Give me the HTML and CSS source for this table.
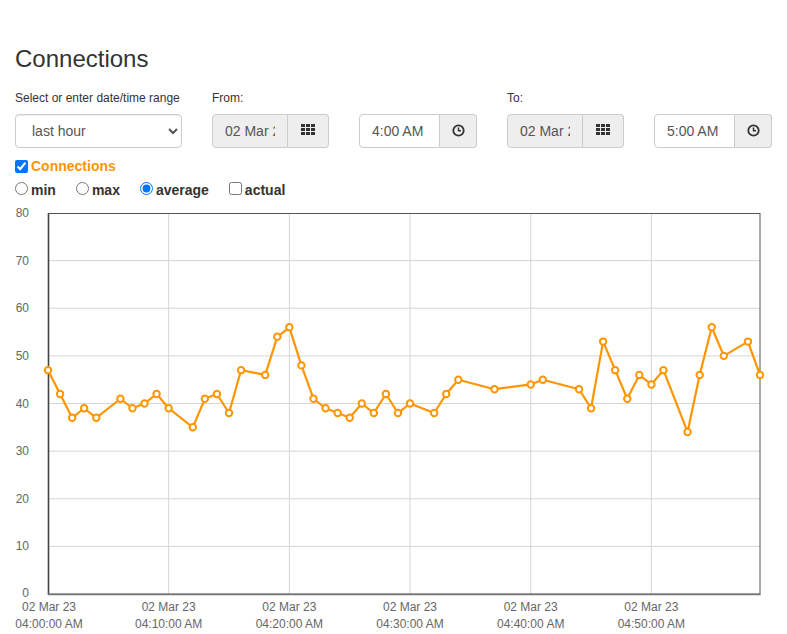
FILE: index.html
```html
<!DOCTYPE html>
<html>
<head>
<meta charset="utf-8">
<link rel="stylesheet" href="styles.css">
</head>
<body>
<div class="page">
  <h1 class="title">Connections</h1>
  <div class="range-row">
    <div class="field field-select">
      <label class="field-label">Select or enter date/time range</label>
      <select class="control select">
        <option>last hour</option>
      </select>
    </div>
    <div class="field field-date">
      <label class="field-label">From:</label>
      <div class="group">
        <input class="control date-input" type="text" value="02 Mar 2023" readonly>
        <span class="addon addon-btn">
          <svg width="14" height="11" viewBox="0 0 14 11"><g fill="#333"><rect x="0" y="0" width="4" height="3"/><rect x="5" y="0" width="4" height="3"/><rect x="10" y="0" width="4" height="3"/><rect x="0" y="4" width="4" height="3"/><rect x="5" y="4" width="4" height="3"/><rect x="10" y="4" width="4" height="3"/><rect x="0" y="8" width="4" height="3"/><rect x="5" y="8" width="4" height="3"/><rect x="10" y="8" width="4" height="3"/></g></svg>
        </span>
      </div>
    </div>
    <div class="field field-time">
      <span class="field-label">&nbsp;</span>
      <div class="group">
        <input class="control time-input" type="text" value="4:00 AM">
        <span class="addon addon-time">
          <svg width="13" height="13" viewBox="0 0 13 13"><circle cx="6.5" cy="6.5" r="5.2" fill="none" stroke="#333" stroke-width="1.8"/><path d="M6.5 3.4V6.8H9" fill="none" stroke="#333" stroke-width="1.5"/></svg>
        </span>
      </div>
    </div>
    <div class="field field-date">
      <label class="field-label">To:</label>
      <div class="group">
        <input class="control date-input" type="text" value="02 Mar 2023" readonly>
        <span class="addon addon-btn">
          <svg width="14" height="11" viewBox="0 0 14 11"><g fill="#333"><rect x="0" y="0" width="4" height="3"/><rect x="5" y="0" width="4" height="3"/><rect x="10" y="0" width="4" height="3"/><rect x="0" y="4" width="4" height="3"/><rect x="5" y="4" width="4" height="3"/><rect x="10" y="4" width="4" height="3"/><rect x="0" y="8" width="4" height="3"/><rect x="5" y="8" width="4" height="3"/><rect x="10" y="8" width="4" height="3"/></g></svg>
        </span>
      </div>
    </div>
    <div class="field field-time">
      <span class="field-label">&nbsp;</span>
      <div class="group">
        <input class="control time-input" type="text" value="5:00 AM">
        <span class="addon addon-time">
          <svg width="13" height="13" viewBox="0 0 13 13"><circle cx="6.5" cy="6.5" r="5.2" fill="none" stroke="#333" stroke-width="1.8"/><path d="M6.5 3.4V6.8H9" fill="none" stroke="#333" stroke-width="1.5"/></svg>
        </span>
      </div>
    </div>
  </div>

  <div class="series-row">
    <label class="series"><input type="checkbox" checked class="box"><span class="series-name">Connections</span></label>
  </div>
  <div class="mode-row">
    <label class="mode"><input type="radio" name="mode" class="box">min</label>
    <label class="mode"><input type="radio" name="mode" class="box">max</label>
    <label class="mode"><input type="radio" name="mode" class="box" checked>average</label>
    <label class="mode"><input type="checkbox" class="box">actual</label>
  </div>

  <svg class="chart" width="772" height="434" viewBox="0 0 772 434">
    <g stroke="#d6d6d6" stroke-width="1" fill="none">
      <line x1="33" y1="346.4" x2="745" y2="346.4"/>
      <line x1="33" y1="298.75" x2="745" y2="298.75"/>
      <line x1="33" y1="251.1" x2="745" y2="251.1"/>
      <line x1="33" y1="203.5" x2="745" y2="203.5"/>
      <line x1="33" y1="155.9" x2="745" y2="155.9"/>
      <line x1="33" y1="108.25" x2="745" y2="108.25"/>
      <line x1="33" y1="60.6" x2="745" y2="60.6"/>
      <line x1="153.68" y1="13" x2="153.68" y2="394"/>
      <line x1="274.36" y1="13" x2="274.36" y2="394"/>
      <line x1="395.03" y1="13" x2="395.03" y2="394"/>
      <line x1="515.71" y1="13" x2="515.71" y2="394"/>
      <line x1="636.39" y1="13" x2="636.39" y2="394"/>
    </g>
    <rect x="33.5" y="13.5" width="711.5" height="380.5" fill="none" stroke="#555" stroke-width="1"/>
    <line x1="33.5" y1="13" x2="33.5" y2="395" stroke="#444" stroke-width="1.6"/>
    <line x1="33" y1="394.5" x2="745.5" y2="394.5" stroke="#777" stroke-width="1.6"/>
    <g class="axis-text" text-anchor="end">
      <text x="14" y="17">80</text>
      <text x="14" y="64.6">70</text>
      <text x="14" y="112.3">60</text>
      <text x="14" y="159.9">50</text>
      <text x="14" y="207.5">40</text>
      <text x="14" y="255.1">30</text>
      <text x="14" y="302.8">20</text>
      <text x="14" y="350.4">10</text>
      <text x="14" y="397">0</text>
    </g>
    <g class="axis-text" text-anchor="middle">
      <text x="34" y="411">02 Mar 23</text><text x="34" y="428">04:00:00 AM</text>
      <text x="153.68" y="411">02 Mar 23</text><text x="153.68" y="428">04:10:00 AM</text>
      <text x="274.36" y="411">02 Mar 23</text><text x="274.36" y="428">04:20:00 AM</text>
      <text x="395.03" y="411">02 Mar 23</text><text x="395.03" y="428">04:30:00 AM</text>
      <text x="515.71" y="411">02 Mar 23</text><text x="515.71" y="428">04:40:00 AM</text>
      <text x="636.39" y="411">02 Mar 23</text><text x="636.39" y="428">04:50:00 AM</text>
    </g>
    <polyline class="series-line" points="33,170.16 45.07,193.97 57.14,217.79 69.2,208.26 81.27,217.79 105.41,198.74 117.47,208.26 129.54,203.5 141.61,193.97 153.68,208.26 177.81,227.31 189.88,198.74 201.95,193.97 214.02,213.02 226.08,170.16 250.22,174.92 262.29,136.82 274.36,127.3 286.42,165.4 298.49,198.74 310.56,208.26 322.63,213.02 334.69,217.79 346.76,203.5 358.83,213.02 370.9,193.97 382.97,213.02 395.03,203.5 419.17,213.02 431.24,193.97 443.31,179.69 479.51,189.21 515.71,184.45 527.78,179.69 563.98,189.21 576.05,208.26 588.12,141.59 600.19,170.16 612.25,198.74 624.32,174.92 636.39,184.45 648.46,170.16 672.59,232.07 684.66,174.92 696.73,127.3 708.8,155.87 732.93,141.59 745,174.92"/>
    <g class="markers">
      <circle cx="33" cy="170.16" r="3.2"/><circle cx="45.07" cy="193.97" r="3.2"/><circle cx="57.14" cy="217.79" r="3.2"/><circle cx="69.2" cy="208.26" r="3.2"/><circle cx="81.27" cy="217.79" r="3.2"/><circle cx="105.41" cy="198.74" r="3.2"/><circle cx="117.47" cy="208.26" r="3.2"/><circle cx="129.54" cy="203.5" r="3.2"/><circle cx="141.61" cy="193.97" r="3.2"/><circle cx="153.68" cy="208.26" r="3.2"/><circle cx="177.81" cy="227.31" r="3.2"/><circle cx="189.88" cy="198.74" r="3.2"/><circle cx="201.95" cy="193.97" r="3.2"/><circle cx="214.02" cy="213.02" r="3.2"/><circle cx="226.08" cy="170.16" r="3.2"/><circle cx="250.22" cy="174.92" r="3.2"/><circle cx="262.29" cy="136.82" r="3.2"/><circle cx="274.36" cy="127.3" r="3.2"/><circle cx="286.42" cy="165.4" r="3.2"/><circle cx="298.49" cy="198.74" r="3.2"/><circle cx="310.56" cy="208.26" r="3.2"/><circle cx="322.63" cy="213.02" r="3.2"/><circle cx="334.69" cy="217.79" r="3.2"/><circle cx="346.76" cy="203.5" r="3.2"/><circle cx="358.83" cy="213.02" r="3.2"/><circle cx="370.9" cy="193.97" r="3.2"/><circle cx="382.97" cy="213.02" r="3.2"/><circle cx="395.03" cy="203.5" r="3.2"/><circle cx="419.17" cy="213.02" r="3.2"/><circle cx="431.24" cy="193.97" r="3.2"/><circle cx="443.31" cy="179.69" r="3.2"/><circle cx="479.51" cy="189.21" r="3.2"/><circle cx="515.71" cy="184.45" r="3.2"/><circle cx="527.78" cy="179.69" r="3.2"/><circle cx="563.98" cy="189.21" r="3.2"/><circle cx="576.05" cy="208.26" r="3.2"/><circle cx="588.12" cy="141.59" r="3.2"/><circle cx="600.19" cy="170.16" r="3.2"/><circle cx="612.25" cy="198.74" r="3.2"/><circle cx="624.32" cy="174.92" r="3.2"/><circle cx="636.39" cy="184.45" r="3.2"/><circle cx="648.46" cy="170.16" r="3.2"/><circle cx="672.59" cy="232.07" r="3.2"/><circle cx="684.66" cy="174.92" r="3.2"/><circle cx="696.73" cy="127.3" r="3.2"/><circle cx="708.8" cy="155.87" r="3.2"/><circle cx="732.93" cy="141.59" r="3.2"/><circle cx="745" cy="174.92" r="3.2"/>
    </g>
  </svg>
</div>
</body>
</html>
```

FILE: styles.css
```css
* { box-sizing: border-box; }
html, body { margin: 0; padding: 0; background: #fff; }
body {
  font-family: "Liberation Sans", Arial, Helvetica, sans-serif;
  font-size: 14px;
  color: #333;
}
.page { padding: 0 0 0 15px; }
.title {
  margin: 0;
  padding-top: 46px;
  font-size: 24px;
  font-weight: 400;
  line-height: 26px;
  color: #333;
}
.range-row {
  display: flex;
  gap: 30px;
  margin-top: 19px;
}
.field { display: flex; flex-direction: column; }
.field-label {
  display: block;
  font-size: 12px;
  line-height: 14px;
  height: 14px;
  margin-bottom: 9px;
  font-weight: 400;
  color: #333;
}
.field-select { width: 167px; }
.field-date { width: 117px; }
.field-time { width: 118px; }
.control {
  height: 34px;
  font-family: "Liberation Sans", Arial, sans-serif;
  font-size: 14px;
  color: #555;
  border: 1px solid #ccc;
  border-radius: 4px;
  padding: 6px 12px;
  background: #fff;
  margin: 0;
  outline: none;
}
.select {
  width: 167px;
  padding-left: 12px;
  box-shadow: inset 0 1px 1px rgba(0,0,0,.075);
}
.group { display: flex; height: 34px; }
.date-input {
  width: 76px;
  background: #eee;
  border-radius: 4px 0 0 4px;
}
.time-input {
  width: 81px;
  border-radius: 4px 0 0 4px;
}
.addon {
  display: flex;
  align-items: center;
  justify-content: center;
  background: #eee;
  border: 1px solid #ccc;
  border-left: 0;
  border-radius: 0 4px 4px 0;
  height: 34px;
}
.addon-btn { width: 41px; padding-bottom: 3px; }
.addon-time { width: 37px; padding-bottom: 1px; }
.series-row {
  margin-top: 9px;
  height: 17px;
  display: flex;
  align-items: center;
}
.series { display: flex; align-items: center; font-weight: 700; }
.series-name { color: #ff9500; font-size: 14px; }
.box { margin: 0 3px 0 0; width: 13px; height: 13px; }
.series .box { margin-top: 2px; }
.mode-row {
  margin-top: 7px;
  height: 17px;
  display: flex;
  align-items: center;
  gap: 20px;
}
.mode {
  display: flex;
  align-items: center;
  font-weight: 700;
  font-size: 14px;
  color: #333;
}
.mode .box { margin-top: -2px; }
.chart { display: block; margin-top: 2px; }
.axis-text text {
  font-family: "Liberation Sans", Arial, sans-serif;
  font-size: 12px;
  fill: #666;
}
.series-line { fill: none; stroke: #ff9500; stroke-width: 2.2; stroke-linejoin: round; }
.markers circle { fill: #fff; stroke: #ff9500; stroke-width: 2; }
```
